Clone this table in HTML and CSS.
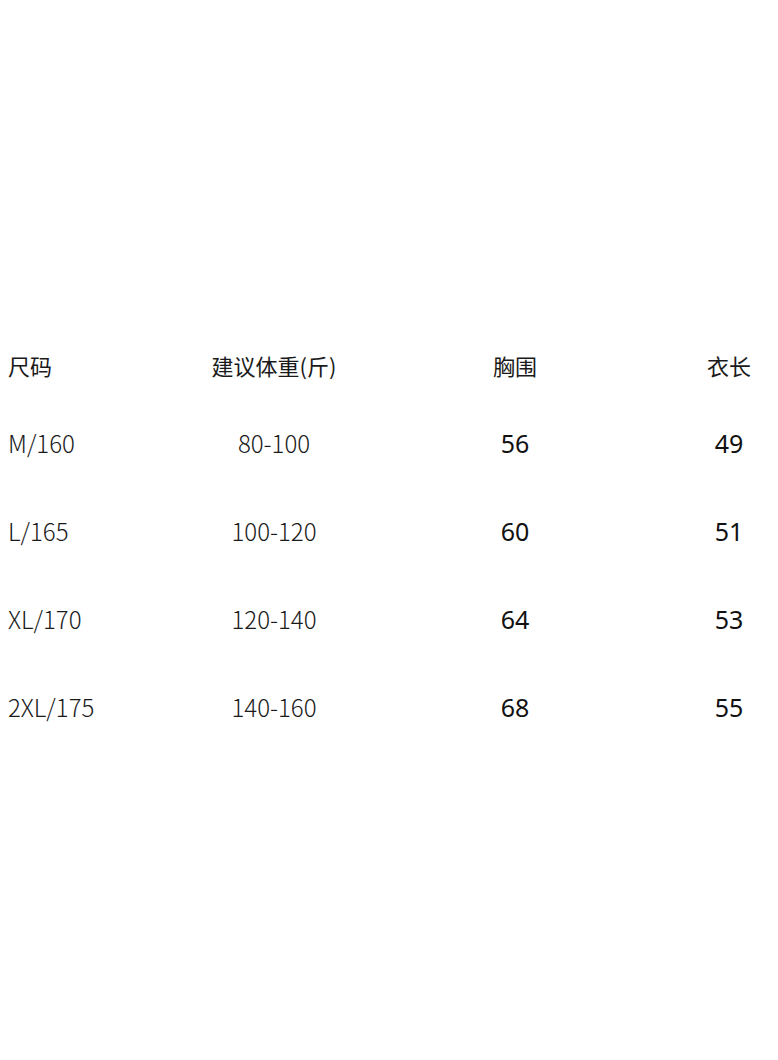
FILE: index.html
```html
<!DOCTYPE html>
<html lang="zh-CN">
<head>
<meta charset="utf-8">
<title>尺码表</title>
<link rel="stylesheet" href="styles.css">
</head>
<body>
<div class="table">
  <div class="row head">
    <div class="c c1">尺码</div>
    <div class="c c2">建议体重(斤)</div>
    <div class="c c3">胸围</div>
    <div class="c c4">衣长</div>
  </div>
  <div class="row">
    <div class="c c1">M/160</div>
    <div class="c c2">80-100</div>
    <div class="c c3 num">56</div>
    <div class="c c4 num">49</div>
  </div>
  <div class="row">
    <div class="c c1">L/165</div>
    <div class="c c2">100-120</div>
    <div class="c c3 num">60</div>
    <div class="c c4 num">51</div>
  </div>
  <div class="row">
    <div class="c c1">XL/170</div>
    <div class="c c2">120-140</div>
    <div class="c c3 num">64</div>
    <div class="c c4 num">53</div>
  </div>
  <div class="row">
    <div class="c c1">2XL/175</div>
    <div class="c c2">140-160</div>
    <div class="c c3 num">68</div>
    <div class="c c4 num">55</div>
  </div>
</div>
</body>
</html>
```

FILE: styles.css
```css
html, body {
  margin: 0;
  padding: 0;
  background: #ffffff;
}
body {
  width: 778px;
  height: 1060px;
  overflow: hidden;
  font-family: "Noto Sans CJK SC", "Noto Sans", sans-serif;
  color: #1a1a1a;
}
.table {
  padding-top: 337px;
  padding-left: 8px;
}
.row {
  display: grid;
  grid-template-columns: 132px 268px 214px 1fr;
  align-items: center;
  height: 88px;
}
.row.head {
  height: 62px;
  padding-bottom: 6px;
  box-sizing: border-box;
}
.c {
  white-space: nowrap;
  font-size: 24px;
  font-weight: 300;
  line-height: 1;
  text-align: center;
}
.head .c {
  font-size: 22px;
  font-weight: 400;
}
.c1 {
  text-align: left;
}
.c4 {
  padding-left: 58px;
  width: 98px;
}
.num {
  font-family: "Noto Sans", sans-serif;
  font-weight: 400;
  font-size: 25px;
  color: #111;
}
```
